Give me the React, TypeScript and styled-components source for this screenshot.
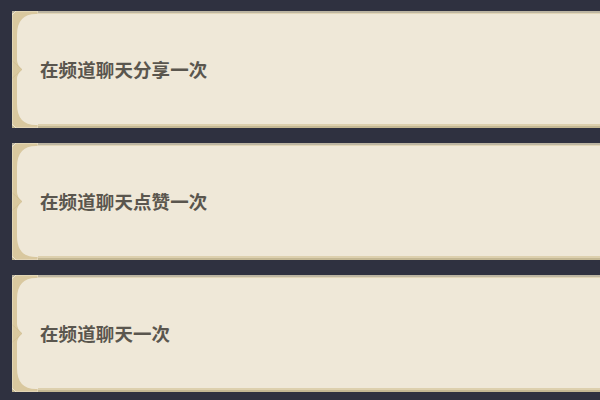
import React from "react";
import styled, { createGlobalStyle } from "styled-components";

const Global = createGlobalStyle`
  html, body {
    margin: 0;
    padding: 0;
    background: #2f3140;
    width: 600px;
    height: 400px;
    overflow: hidden;
  }
`;

const List = styled.div`
  display: flex;
  flex-direction: column;
  gap: 15px;
  padding: 11px 0 0 12px;
`;

const Card = styled.div`
  position: relative;
  display: flex;
  align-items: center;
  height: 117px;
  box-sizing: border-box;
  background: #efe8d8;
  border-top: 2px solid #bcb5a2;
  border-bottom: 2px solid #c4b894;
  box-shadow: inset 0 1px 0 #e2d6b8, inset 0 -2px 0 #ddd0ae;
`;

const Ornament = styled.svg`
  flex-shrink: 0;
  width: 26px;
  height: 117px;
  margin-top: -2px;
  margin-bottom: -2px;
  display: block;
`;

const Label = styled.span`
  padding-left: 2px;
  font-family: "Noto Sans CJK SC", "Noto Sans", sans-serif;
  font-weight: 700;
  font-size: 18.5px;
  letter-spacing: 0.1px;
  color: #5a564e;
  line-height: 1;
`;

const LeftFrame: React.FC = () => (
  <Ornament viewBox="0 0 26 117" preserveAspectRatio="none">
    <path
      d="M4,0 H26 V117 H4 L0,113 V4 Z"
      fill="#d9c89f"
      stroke="#ece3cc"
      strokeWidth="1"
    />
    <path
      d="M5,24 Q5,3 24,3 H26 V114 H24 Q5,114 5,93 V68 Q5,63 10,58.5 Q5,54 5,49 Z"
      fill="#efe8d8"
    />
    <path d="M0.5,50 L10,58.5 L0.5,67" fill="none" stroke="#cdb98a" strokeWidth="0.8" opacity="0.6" />
  </Ornament>
);

const tasks = ["在频道聊天分享一次", "在频道聊天点赞一次", "在频道聊天一次"];

export default function App() {
  return (
    <>
      <Global />
      <List>
        {tasks.map((t) => (
          <Card key={t}>
            <LeftFrame />
            <Label>{t}</Label>
          </Card>
        ))}
      </List>
    </>
  );
}
